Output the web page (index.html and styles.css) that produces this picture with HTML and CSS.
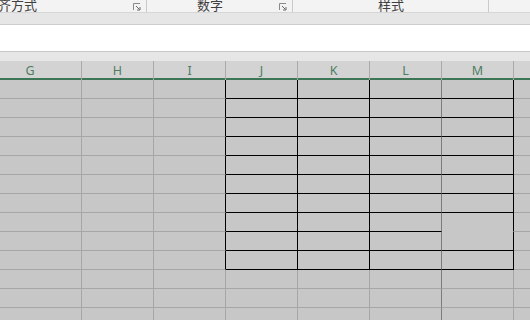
FILE: index.html
```html
<!DOCTYPE html>
<html lang="zh-CN">
<head>
    <meta charset="UTF-8">
    <title>工作表</title>
    <link rel="stylesheet" href="styles.css">
</head>
<body>
    <div class="ribbon">
        <div class="group g1">
            <span class="label">齐方式</span>
            <svg class="launcher" width="8" height="8" viewBox="0 0 8 8"><path d="M0.5 7V0.5H7" fill="none" stroke="#8a8a8a"/><path d="M3 3l3.5 3.5M7 4v3H4" fill="none" stroke="#6a6a6a"/></svg>
        </div>
        <div class="group g2">
            <span class="label">数字</span>
            <svg class="launcher" width="8" height="8" viewBox="0 0 8 8"><path d="M0.5 7V0.5H7" fill="none" stroke="#8a8a8a"/><path d="M3 3l3.5 3.5M7 4v3H4" fill="none" stroke="#6a6a6a"/></svg>
        </div>
        <div class="group g3">
            <span class="label">样式</span>
        </div>
        <div class="group g4"></div>
    </div>
    <div class="band"></div>
    <div class="formula"></div>
    <div class="band thin"></div>

    <div class="headers">
        <div class="h first">G</div>
        <div class="h">H</div>
        <div class="h">I</div>
        <div class="h">J</div>
        <div class="h">K</div>
        <div class="h">L</div>
        <div class="h">M</div>
        <div class="h"></div>
    </div>

    <div class="sheet">
        <div class="row box"><div class="c"></div><div class="c"></div><div class="c"></div><div class="c"></div><div class="c"></div><div class="c"></div><div class="c"></div><div class="c"></div></div>
        <div class="row box"><div class="c"></div><div class="c"></div><div class="c"></div><div class="c"></div><div class="c"></div><div class="c"></div><div class="c"></div><div class="c"></div></div>
        <div class="row box"><div class="c"></div><div class="c"></div><div class="c"></div><div class="c"></div><div class="c"></div><div class="c"></div><div class="c"></div><div class="c"></div></div>
        <div class="row box"><div class="c"></div><div class="c"></div><div class="c"></div><div class="c"></div><div class="c"></div><div class="c"></div><div class="c"></div><div class="c"></div></div>
        <div class="row box"><div class="c"></div><div class="c"></div><div class="c"></div><div class="c"></div><div class="c"></div><div class="c"></div><div class="c"></div><div class="c"></div></div>
        <div class="row box"><div class="c"></div><div class="c"></div><div class="c"></div><div class="c"></div><div class="c"></div><div class="c"></div><div class="c"></div><div class="c"></div></div>
        <div class="row box"><div class="c"></div><div class="c"></div><div class="c"></div><div class="c"></div><div class="c"></div><div class="c"></div><div class="c"></div><div class="c"></div></div>
        <div class="row box merged"><div class="c"></div><div class="c"></div><div class="c"></div><div class="c"></div><div class="c"></div><div class="c"></div><div class="c"></div><div class="c"></div></div>
        <div class="row box"><div class="c"></div><div class="c"></div><div class="c"></div><div class="c"></div><div class="c"></div><div class="c"></div><div class="c"></div><div class="c"></div></div>
        <div class="row box"><div class="c"></div><div class="c"></div><div class="c"></div><div class="c"></div><div class="c"></div><div class="c"></div><div class="c"></div><div class="c"></div></div>
        <div class="row"><div class="c"></div><div class="c"></div><div class="c"></div><div class="c"></div><div class="c"></div><div class="c"></div><div class="c"></div><div class="c"></div></div>
        <div class="row"><div class="c"></div><div class="c"></div><div class="c"></div><div class="c"></div><div class="c"></div><div class="c"></div><div class="c"></div><div class="c"></div></div>
        <div class="row"><div class="c"></div><div class="c"></div><div class="c"></div><div class="c"></div><div class="c"></div><div class="c"></div><div class="c"></div><div class="c"></div></div>
    </div>
</body>
</html>
```

FILE: styles.css
```css
body {
    margin: 0;
    width: 530px;
    height: 320px;
    overflow: hidden;
    background: #c7c7c7;
    font-family: "Noto Sans CJK SC", "Noto Sans", sans-serif;
}

/* ribbon strip (group captions) */
.ribbon {
    display: flex;
    height: 12px;
    background: #f3f3f3;
    border-bottom: 1px solid #d6d6d6;
    overflow: hidden;
}

.group {
    position: relative;
    height: 12px;
    border-right: 1px solid #c9c9c9;
    box-sizing: border-box;
    font-size: 13px;
    color: #404040;
}

.group .label {
    display: block;
    line-height: 13px;
    margin-top: -2px;
    white-space: nowrap;
}

.g1 { width: 147px; }
.g1 .label { margin-left: -2px; }
.g2 { width: 146px; }
.g2 .label { padding-left: 50px; }
.g3 { width: 196px; }
.g3 .label { padding-left: 85px; }
.g4 { flex: 1; border-right: none; }

.launcher {
    position: absolute;
    top: 3px;
    right: 5px;
}

.band {
    height: 11px;
    background: #e6e6e6;
    border-bottom: 1px solid #cdcdcd;
}

.band.thin {
    height: 9px;
    border-bottom: none;
}

.formula {
    height: 26px;
    background: #fff;
    border-bottom: 1px solid #c8c8c8;
}

/* column headers */
.headers {
    display: grid;
    grid-template-columns: 82px repeat(6, 72px) 1fr;
    height: 17px;
    background: #d3d3d3;
    border-bottom: 2px solid #3c7656;
}

.h {
    border-right: 1px solid #ababab;
    font-family: "Noto Sans", sans-serif;
    font-size: 12.5px;
    line-height: 19px;
    text-align: center;
    color: #4d7d63;
}

.h.first {
    padding-right: 21px;
}

.h:last-child {
    border-right: none;
}

/* cells */
.row {
    display: grid;
    grid-template-columns: 82px repeat(6, 72px) 1fr;
    height: 19px;
}

.c {
    border-right: 1px solid #a6a6a6;
    border-bottom: 1px solid #a6a6a6;
}

.c:nth-child(6) {
    border-right-color: #7c7c7c;
}

.c:last-child {
    border-right: none;
}

.box .c:nth-child(3) {
    border-right-color: #000;
}

.box .c:nth-child(4),
.box .c:nth-child(5) {
    border-right-color: #000;
    border-bottom-color: #000;
}

.box .c:nth-child(6) {
    border-bottom-color: #000;
}

.box .c:nth-child(7) {
    border-right-color: #000;
    border-bottom-color: #000;
}

.box.merged .c:nth-child(7) {
    border-bottom-color: #c7c7c7;
}
```
